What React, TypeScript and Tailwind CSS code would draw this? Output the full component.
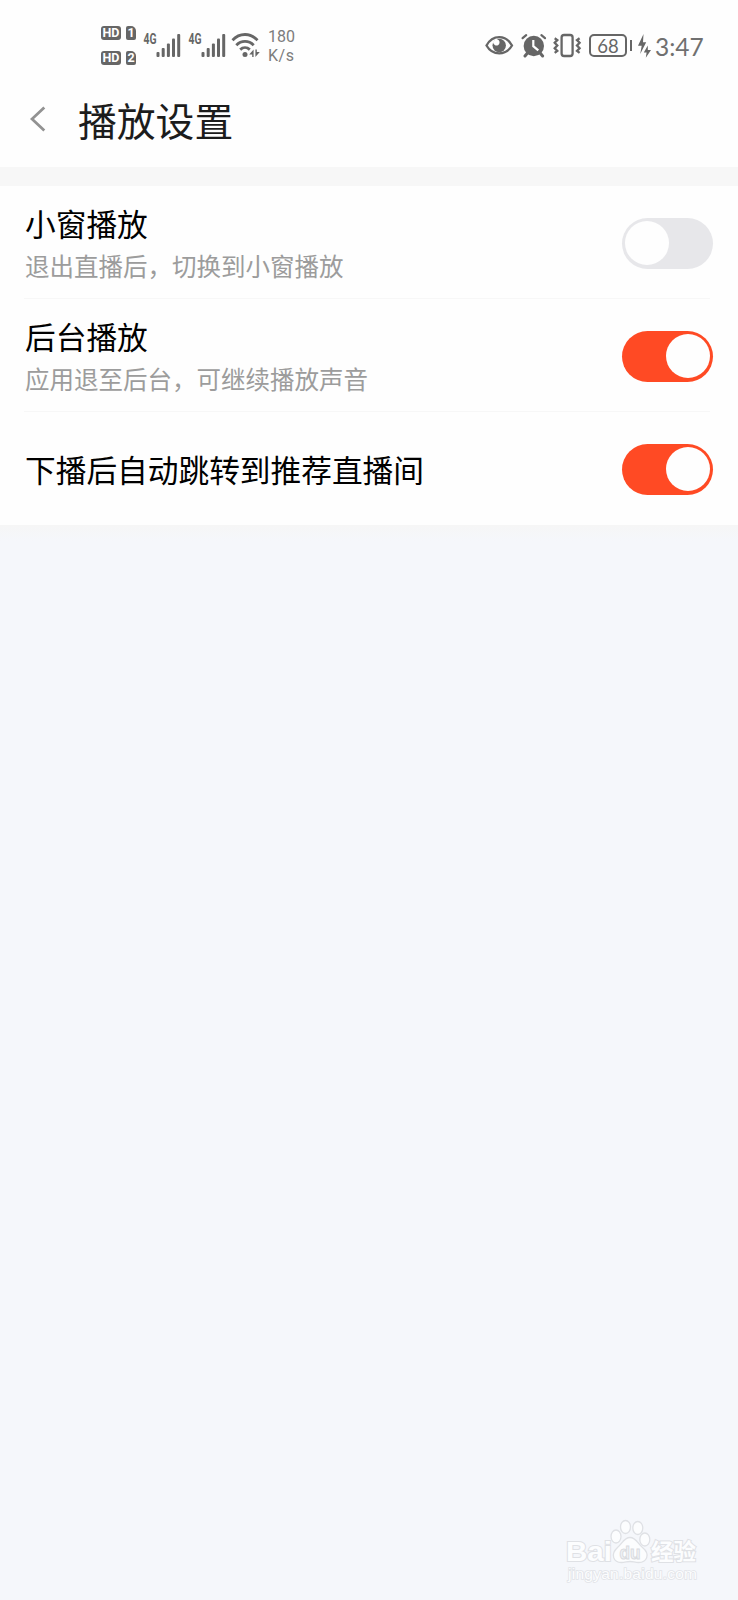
// App.tsx
import { useState } from "react";

const rows = [
  { title: "小窗播放", desc: "退出直播后，切换到小窗播放", on: false },
  { title: "后台播放", desc: "应用退至后台，可继续播放声音", on: true },
  { title: "下播后自动跳转到推荐直播间", desc: "", on: true },
];

function SimBadge({ num }: { num: string }) {
  return (
    <div className="flex gap-[5px] h-[14px] text-white font-['Roboto'] font-bold leading-[14px] text-center">
      <span className="w-5 rounded-[3px] bg-[#666] text-[12.5px]">HD</span>
      <span className="w-[10px] rounded-[2px] rounded-tr-[5px] bg-[#666] text-[12.5px]">{num}</span>
    </div>
  );
}

function Signal() {
  return (
    <svg width="38" height="26" viewBox="0 0 38 26" fill="#666">
      <text transform="translate(0.5 12) scale(0.74 1)" fontFamily="Roboto" fontWeight="700" fontSize="14">4G</text>
      <rect x="13.5" y="20" width="3" height="5" rx="1" />
      <rect x="18.7" y="16" width="3" height="9" rx="1" />
      <rect x="23.9" y="11.5" width="3" height="13.5" rx="1" />
      <rect x="29" y="6.5" width="3" height="18.5" rx="1" />
      <rect x="34.2" y="2" width="3" height="23" rx="1" />
    </svg>
  );
}

function StatusBar() {
  return (
    <div className="h-[88px] relative text-[#666]">
      <div className="absolute left-[101px] top-[26px] flex flex-col gap-[11px]">
        <SimBadge num="1" />
        <SimBadge num="2" />
      </div>
      <div className="absolute left-[143px] top-8 flex gap-[7px]">
        <Signal />
        <Signal />
      </div>
      {/* wifi */}
      <svg className="absolute left-[231px] top-8" width="30" height="26" viewBox="0 0 30 26" fill="none" stroke="#666" strokeWidth="2.8">
        <path d="M1.5 8.2C8.5 0.6 19.5 0.6 26.5 8.2" />
        <path d="M5.3 13.2C10.3 8.2 17.7 8.2 22.7 13.2" />
        <path d="M9.2 17.6C12 15 16 15 18.8 17.6" />
        <circle cx="14" cy="22.4" r="2.5" fill="#666" stroke="none" />
        <path d="M22.6 17.5v7.5h-1.4v-2.5h-3zM24.4 25v-7.5h1.4v2.5h3z" fill="#666" stroke="none" />
      </svg>
      <div className="absolute left-[268px] top-[27px] font-['Roboto'] text-[#7c7c7c] text-[16px] leading-[19px]">
        <div>180</div>
        <div className="tracking-[0.5px]">K/s</div>
      </div>

      {/* eye */}
      <svg className="absolute left-[485px] top-[34px]" width="29" height="22" viewBox="0 0 29 22">
        <path d="M1.5 11.5C7.5 0.3 21 0.3 27 11.5C21 22 7.5 22 1.5 11.5Z" fill="none" stroke="#666" strokeWidth="2.3" />
        <circle cx="14.2" cy="11.5" r="6.7" fill="#666" />
        <path d="M8 8.2a3.6 3.6 0 0 0 5 3a3.4 3.4 0 0 0 0.8-5L11 4.5z" fill="#fff" />
      </svg>
      {/* alarm */}
      <svg className="absolute left-[521px] top-[33px]" width="26" height="25" viewBox="0 0 26 25">
        <circle cx="12.8" cy="13" r="10.2" fill="#666" />
        <path d="M6.5 20l-2.5 3M19.1 20l2.5 3" stroke="#666" strokeWidth="3" fill="none" strokeLinecap="round" />
        <path d="M1.6 5.2L5.2 2.2M24 5.2L20.4 2.2" stroke="#666" strokeWidth="2.2" fill="none" strokeLinecap="round" />
        <path d="M12.3 7v6.2l5 4.2" stroke="#fff" strokeWidth="2.2" fill="none" />
      </svg>
      {/* vibrate */}
      <svg className="absolute left-[553px] top-[33px]" width="29" height="25" viewBox="0 0 29 25" fill="none" stroke="#666" strokeWidth="2.3">
        <rect x="8.6" y="2" width="11" height="21" rx="2.5" />
        <path d="M1.7 5.3l2.6 1.8-2.6 2.7 2.6 2.7-2.6 2.7 2.6 2.7-2.6 2" />
        <path d="M26.6 5.3l-2.6 1.8 2.6 2.7-2.6 2.7 2.6 2.7-2.6 2.7 2.6 2" />
      </svg>
      {/* battery */}
      <div className="absolute left-[589px] top-[34px] flex items-center gap-[3px]">
        <div className="w-[38px] h-[23px] rounded-[5px] border-2 border-[#666] font-['Lato'] text-[18.5px] leading-[20px] text-center">68</div>
        <div className="w-[2px] h-[11px] bg-[#666]" />
      </div>
      <svg className="absolute left-[637px] top-[34px]" width="14" height="24" viewBox="0 0 14 24" fill="#666">
        <path d="M6.5 0L1 11.8h3.7L3.2 20L9.2 8.3H6z" />
        <path d="M10.8 11.5L6.8 18.6h2.8L8.8 23.8L14 16H10.8z" />
      </svg>
      <div className="absolute left-[655px] top-[31px] font-['Lato'] text-[#707070] text-[24.5px] leading-[31px]">3:47</div>
    </div>
  );
}

function Toggle({ initial }: { initial: boolean }) {
  const [on, setOn] = useState(initial);
  return (
    <button
      onClick={() => setOn(!on)}
      className={`flex items-center mt-px w-[91px] h-[51px] rounded-full px-[3px] ${on ? "bg-[#ff4a24] justify-end" : "bg-[#e7e7ea] justify-start"}`}
    >
      <span className="size-[44px] rounded-full bg-[#fefefe]" />
    </button>
  );
}

function Watermark() {
  return (
    <svg className="absolute left-[560px] top-[1515px]" width="145" height="70" viewBox="0 0 145 70" fill="#fcfdfe" stroke="#dfe1e5" strokeWidth="1.3">
      <text x="6" y="46" fontFamily="'Liberation Sans'" fontWeight="700" fontSize="28" textLength="46" lengthAdjust="spacingAndGlyphs" paintOrder="stroke" strokeWidth="2">Bai</text>
      <ellipse cx="56" cy="21.5" rx="5" ry="6.5" />
      <ellipse cx="65.5" cy="12" rx="5" ry="6.5" />
      <ellipse cx="77.8" cy="13" rx="5" ry="6.5" />
      <ellipse cx="84.8" cy="24.5" rx="5" ry="6.5" />
      <path d="M70 22.5C76 22.5 78 29 82.5 32.5C91 39.5 86.5 47.5 78.5 47.5C75 47.5 73 46.5 70 46.5C67 46.5 65 47.5 61.5 47.5C53.5 47.5 50 39.5 57.5 32.5C62 29 64 22.5 70 22.5Z" />
      <text x="59.5" y="43.5" fontFamily="'Liberation Sans'" fontWeight="700" fontSize="19" textLength="21" lengthAdjust="spacingAndGlyphs" fill="#f0f2f5" stroke="#d9dbdf" strokeWidth="1">du</text>
      <text x="91" y="45" fontFamily="'Noto Sans CJK SC', sans-serif" fontWeight="700" fontSize="22.5" paintOrder="stroke" strokeWidth="2">经验</text>
      <text x="8" y="64" fontFamily="'Liberation Sans'" fontSize="15.5" textLength="129" paintOrder="stroke" stroke="#e1e3e7" strokeWidth="1.5">jingyan.baidu.com</text>
    </svg>
  );
}

export default function App() {
  return (
    <div className="relative h-[1600px] w-[738px] overflow-hidden bg-[#f5f7fb] font-['Noto_Sans_CJK_SC',sans-serif]">
      {/* Header */}
      <div className="h-[167px] bg-[#fefefe]">
        <StatusBar />
        <div className="flex items-center h-[64px] pl-[30px]">
          <svg className="mt-[-3px]" width="16" height="26" viewBox="0 0 16 26" fill="none" stroke="#929292" strokeWidth="2.8">
            <path d="M14.3 1.5L2 13L14.3 24.5" />
          </svg>
          <h1 className="ml-[32px] mt-[-2px] text-[38.8px] leading-[56px] text-[#1c1c1c]">播放设置</h1>
        </div>
      </div>
      <div className="h-[19px] bg-[#f7f7f7]" />

      {/* Settings */}
      <div className="bg-[#fefefe]">
        {rows.map((row, i) => (
          <div key={row.title} className="h-[113px] relative flex items-center justify-between pl-[25px] pr-[25px]">
            <div className={row.desc ? "pt-[3px]" : ""}>
              <div className="text-[30.7px] leading-[42px] text-black">{row.title}</div>
              {row.desc && <div className="mt-px text-[24.5px] leading-[42px] text-[#9c9c9c]">{row.desc}</div>}
            </div>
            <Toggle initial={row.on} />
            {i < 2 && <div className="absolute left-6 right-7 bottom-0 h-px bg-[#f7f7f7]" />}
          </div>
        ))}
      </div>
      <div className="h-[16px] bg-gradient-to-b from-[#f6f6f6] to-[#f5f7fb]" />

      <Watermark />
    </div>
  );
}
